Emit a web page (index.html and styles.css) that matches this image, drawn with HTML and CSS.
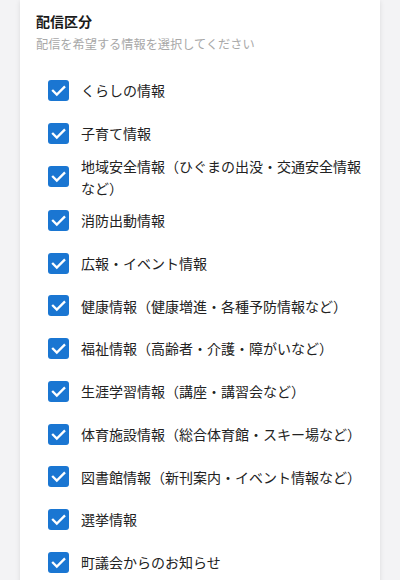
FILE: index.html
```html
<!DOCTYPE html>
<html lang="ja">
<head>
<meta charset="utf-8">
<link rel="stylesheet" href="styles.css">
</head>
<body>
<div class="card">
  <h2 class="title">配信区分</h2>
  <p class="subtitle">配信を希望する情報を選択してください</p>
  <ul class="list">
    <li class="row"><span class="cb"><svg viewBox="0 0 21 21"><path d="M5 10.8 L8.8 14.6 L16.2 7.2"/></svg></span><span class="label">くらしの情報</span></li>
    <li class="row"><span class="cb"><svg viewBox="0 0 21 21"><path d="M5 10.8 L8.8 14.6 L16.2 7.2"/></svg></span><span class="label">子育て情報</span></li>
    <li class="row"><span class="cb"><svg viewBox="0 0 21 21"><path d="M5 10.8 L8.8 14.6 L16.2 7.2"/></svg></span><span class="label">地域安全情報（ひぐまの出没・交通安全情報など）</span></li>
    <li class="row"><span class="cb"><svg viewBox="0 0 21 21"><path d="M5 10.8 L8.8 14.6 L16.2 7.2"/></svg></span><span class="label">消防出動情報</span></li>
    <li class="row"><span class="cb"><svg viewBox="0 0 21 21"><path d="M5 10.8 L8.8 14.6 L16.2 7.2"/></svg></span><span class="label">広報・イベント情報</span></li>
    <li class="row"><span class="cb"><svg viewBox="0 0 21 21"><path d="M5 10.8 L8.8 14.6 L16.2 7.2"/></svg></span><span class="label">健康情報（健康増進・各種予防情報など）</span></li>
    <li class="row"><span class="cb"><svg viewBox="0 0 21 21"><path d="M5 10.8 L8.8 14.6 L16.2 7.2"/></svg></span><span class="label">福祉情報（高齢者・介護・障がいなど）</span></li>
    <li class="row"><span class="cb"><svg viewBox="0 0 21 21"><path d="M5 10.8 L8.8 14.6 L16.2 7.2"/></svg></span><span class="label">生涯学習情報（講座・講習会など）</span></li>
    <li class="row"><span class="cb"><svg viewBox="0 0 21 21"><path d="M5 10.8 L8.8 14.6 L16.2 7.2"/></svg></span><span class="label">体育施設情報（総合体育館・スキー場など）</span></li>
    <li class="row"><span class="cb"><svg viewBox="0 0 21 21"><path d="M5 10.8 L8.8 14.6 L16.2 7.2"/></svg></span><span class="label">図書館情報（新刊案内・イベント情報など）</span></li>
    <li class="row"><span class="cb"><svg viewBox="0 0 21 21"><path d="M5 10.8 L8.8 14.6 L16.2 7.2"/></svg></span><span class="label">選挙情報</span></li>
    <li class="row"><span class="cb"><svg viewBox="0 0 21 21"><path d="M5 10.8 L8.8 14.6 L16.2 7.2"/></svg></span><span class="label">町議会からのお知らせ</span></li>
  </ul>
</div>
</body>
</html>
```
FILE: styles.css
```css
html, body {
  margin: 0;
  padding: 0;
}
body {
  background: #f3f3f5;
  font-family: "Noto Sans CJK JP", "Noto Sans", sans-serif;
  height: 580px;
  overflow: hidden;
}
.card {
  margin: 0 20px;
  background: #ffffff;
  box-shadow: 0 1px 5px rgba(0, 0, 0, 0.10);
  padding: 10px 16px 20px;
  min-height: 700px;
}
.title {
  margin: 0;
  font-size: 14px;
  line-height: 22px;
  font-weight: 700;
  color: #1a1a1a;
}
.subtitle {
  margin: 2px 0 0;
  font-size: 12.2px;
  line-height: 20px;
  color: #a8a8a8;
}
.list {
  list-style: none;
  margin: 15px 0 0;
  padding: 0 0 0 12px;
}
.row {
  display: flex;
  align-items: center;
  gap: 12px;
  min-height: 42.75px;
}
.cb {
  flex: 0 0 21px;
  width: 21px;
  height: 21px;
  border-radius: 3px;
  background: #1a76d2;
  display: flex;
}
.cb svg {
  width: 21px;
  height: 21px;
  fill: none;
  stroke: #ffffff;
  stroke-width: 2.3;
  stroke-linecap: square;
}
.label {
  font-size: 14px;
  line-height: 22.2px;
  color: #222222;
}
```
